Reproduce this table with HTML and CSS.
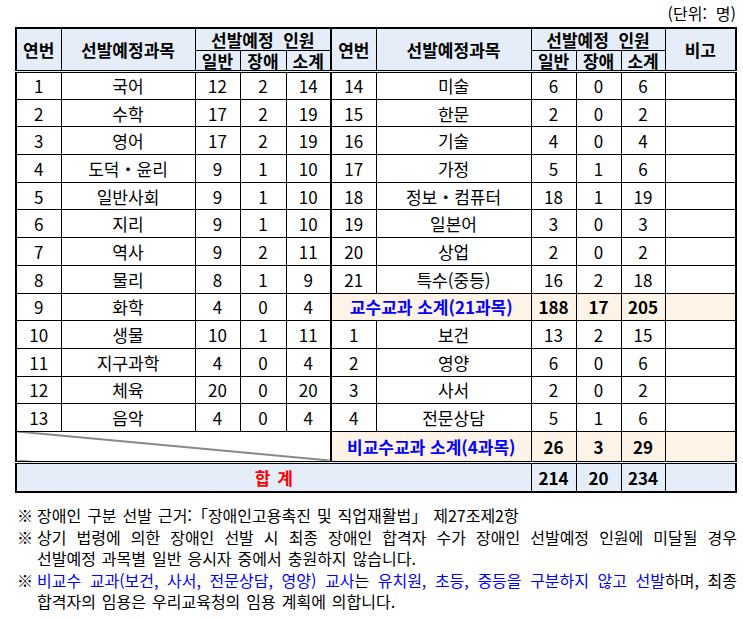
FILE: index.html
```html
<!DOCTYPE html>
<html lang="ko">
<head>
<meta charset="utf-8">
<title>선발예정 인원</title>
<link rel="stylesheet" href="styles.css">
</head>
<body>
<div class="page">
  <div class="unit">(단위:&nbsp; 명)</div>
  <table class="grid">
    <colgroup>
      <col class="c-no"><col class="c-subj"><col class="c-n"><col class="c-n2"><col class="c-n">
      <col class="c-no"><col class="c-subj2"><col class="c-n"><col class="c-n"><col class="c-n3"><col class="c-note">
    </colgroup>
    <thead>
      <tr class="h1">
        <th rowspan="2">연번</th>
        <th rowspan="2">선발예정과목</th>
        <th colspan="3" class="mid">선발예정&nbsp; 인원</th>
        <th rowspan="2">연번</th>
        <th rowspan="2">선발예정과목</th>
        <th colspan="3">선발예정&nbsp; 인원</th>
        <th rowspan="2">비고</th>
      </tr>
      <tr class="h2">
        <th>일반</th><th>장애</th><th class="mid">소계</th>
        <th>일반</th><th>장애</th><th>소계</th>
      </tr>
    </thead>
    <tbody>
      <tr><td>1</td><td>국어</td><td>12</td><td>2</td><td class="mid">14</td><td>14</td><td>미술</td><td>6</td><td>0</td><td>6</td><td></td></tr>
      <tr><td>2</td><td>수학</td><td>17</td><td>2</td><td class="mid">19</td><td>15</td><td>한문</td><td>2</td><td>0</td><td>2</td><td></td></tr>
      <tr><td>3</td><td>영어</td><td>17</td><td>2</td><td class="mid">19</td><td>16</td><td>기술</td><td>4</td><td>0</td><td>4</td><td></td></tr>
      <tr><td>4</td><td>도덕・윤리</td><td>9</td><td>1</td><td class="mid">10</td><td>17</td><td>가정</td><td>5</td><td>1</td><td>6</td><td></td></tr>
      <tr><td>5</td><td>일반사회</td><td>9</td><td>1</td><td class="mid">10</td><td>18</td><td>정보・컴퓨터</td><td>18</td><td>1</td><td>19</td><td></td></tr>
      <tr><td>6</td><td>지리</td><td>9</td><td>1</td><td class="mid">10</td><td>19</td><td>일본어</td><td>3</td><td>0</td><td>3</td><td></td></tr>
      <tr><td>7</td><td>역사</td><td>9</td><td>2</td><td class="mid">11</td><td>20</td><td>상업</td><td>2</td><td>0</td><td>2</td><td></td></tr>
      <tr><td>8</td><td>물리</td><td>8</td><td>1</td><td class="mid">9</td><td>21</td><td>특수(중등)</td><td>16</td><td>2</td><td>18</td><td></td></tr>
      <tr><td>9</td><td>화학</td><td>4</td><td>0</td><td class="mid">4</td><td colspan="2" class="sub label">교수교과 소계(21과목)</td><td class="sub num">188</td><td class="sub num">17</td><td class="sub num">205</td><td class="sub"></td></tr>
      <tr><td>10</td><td>생물</td><td>10</td><td>1</td><td class="mid">11</td><td>1</td><td>보건</td><td>13</td><td>2</td><td>15</td><td></td></tr>
      <tr><td>11</td><td>지구과학</td><td>4</td><td>0</td><td class="mid">4</td><td>2</td><td>영양</td><td>6</td><td>0</td><td>6</td><td></td></tr>
      <tr><td>12</td><td>체육</td><td>20</td><td>0</td><td class="mid">20</td><td>3</td><td>사서</td><td>2</td><td>0</td><td>2</td><td></td></tr>
      <tr><td>13</td><td>음악</td><td>4</td><td>0</td><td class="mid">4</td><td>4</td><td>전문상담</td><td>5</td><td>1</td><td>6</td><td></td></tr>
      <tr class="r-sub2"><td colspan="5" class="diag mid"></td><td colspan="2" class="sub label">비교수교과 소계(4과목)</td><td class="sub num">26</td><td class="sub num">3</td><td class="sub num">29</td><td class="sub"></td></tr>
      <tr class="r-total"><td colspan="7" class="tot total-label">합 계</td><td class="tot num">214</td><td class="tot num">20</td><td class="tot num">234</td><td class="tot"></td></tr>
    </tbody>
  </table>
  <div class="notes">
    <p class="note"><span class="mark">※</span><span class="body"><span class="line">장애인 구분 선발 근거:「장애인고용촉진 및 직업재활법」 제27조제2항</span></span></p>
    <p class="note"><span class="mark">※</span><span class="body"><span class="line full">상기 법령에 의한 장애인 선발 시 최종 장애인 합격자 수가 장애인 선발예정 인원에 미달될 경우</span><span class="line">선발예정 과목별 일반 응시자 중에서 충원하지 않습니다.</span></span></p>
    <p class="note"><span class="mark">※</span><span class="body"><span class="line full"><span class="blue">비교수 교과(보건, 사서, 전문상담, 영양) 교사</span>는 <span class="blue">유치원, 초등, 중등을 구분하지 않고 선발</span>하며, 최종</span><span class="line">합격자의 임용은 우리교육청의 임용 계획에 의합니다.</span></span></p>
  </div>
</div>
</body>
</html>
```

FILE: styles.css
```css
html, body {
  margin: 0;
  padding: 0;
  background: #ffffff;
}

body {
  font-family: "Noto Sans CJK KR", "Noto Sans", sans-serif;
  color: #000000;
  font-size: 16px;
}

.page {
  width: 722px;
  margin-left: 15px;
}

.unit {
  height: 27px;
  line-height: 26px;
  text-align: right;
  padding-right: 1px;
  font-size: 16px;
}

.grid {
  width: 722px;
  table-layout: fixed;
  border-collapse: collapse;
  border: 2px solid #000;
}

.c-no { width: 45px; }
.c-subj { width: 134px; }
.c-n { width: 45px; }
.c-n2 { width: 46px; }
.c-n3 { width: 44px; }
.c-subj2 { width: 155px; }
.c-note { width: 71px; }

.grid th,
.grid td {
  border: 1px solid #000;
  padding: 0;
  text-align: center;
  vertical-align: middle;
  line-height: 1;
  font-size: 17px;
  white-space: nowrap;
}

.grid th {
  background: #e5edf8;
  font-weight: 700;
}

.grid thead tr.h1 { height: 22.5px; }
.grid thead tr.h2 { height: 21px; }
.grid thead tr.h2 th { border-bottom: 3px double #000; }
.grid thead tr.h1 th[rowspan] { border-bottom: 3px double #000; }

.grid tbody tr { height: 27.7px; }
.grid tbody tr.r-sub2 { height: 31px; }
.grid tbody tr.r-total { height: 30px; }

.grid .mid { border-right: 2px solid #000; }

.grid tr.r-total td { border-top: 3px double #000; }

.sub { background: #fdf3e6; }
.tot { background: #e5edf8; }

.label {
  color: #0000ff;
  font-weight: 700;
}

.num { font-weight: 700; }

.total-label {
  color: #ff0000;
  font-weight: 700;
  word-spacing: 2px;
}

.diag {
  background: linear-gradient(to top right, #ffffff calc(50% - 1px), #111111 50%, #ffffff calc(50% + 1px));
}

.notes {
  margin-top: 12px;
  width: 720px;
  margin-left: 2px;
}

.note {
  margin: 0;
  display: flex;
  line-height: 21.5px;
}

.mark {
  width: 20px;
  flex: none;
}

.body {
  flex: 1;
  min-width: 0;
}

.line {
  display: block;
  white-space: nowrap;
  word-spacing: 1.5px;
}

.line.full {
  text-align: justify;
  text-align-last: justify;
  word-spacing: 0;
}

.blue { color: #0000ff; }
```
